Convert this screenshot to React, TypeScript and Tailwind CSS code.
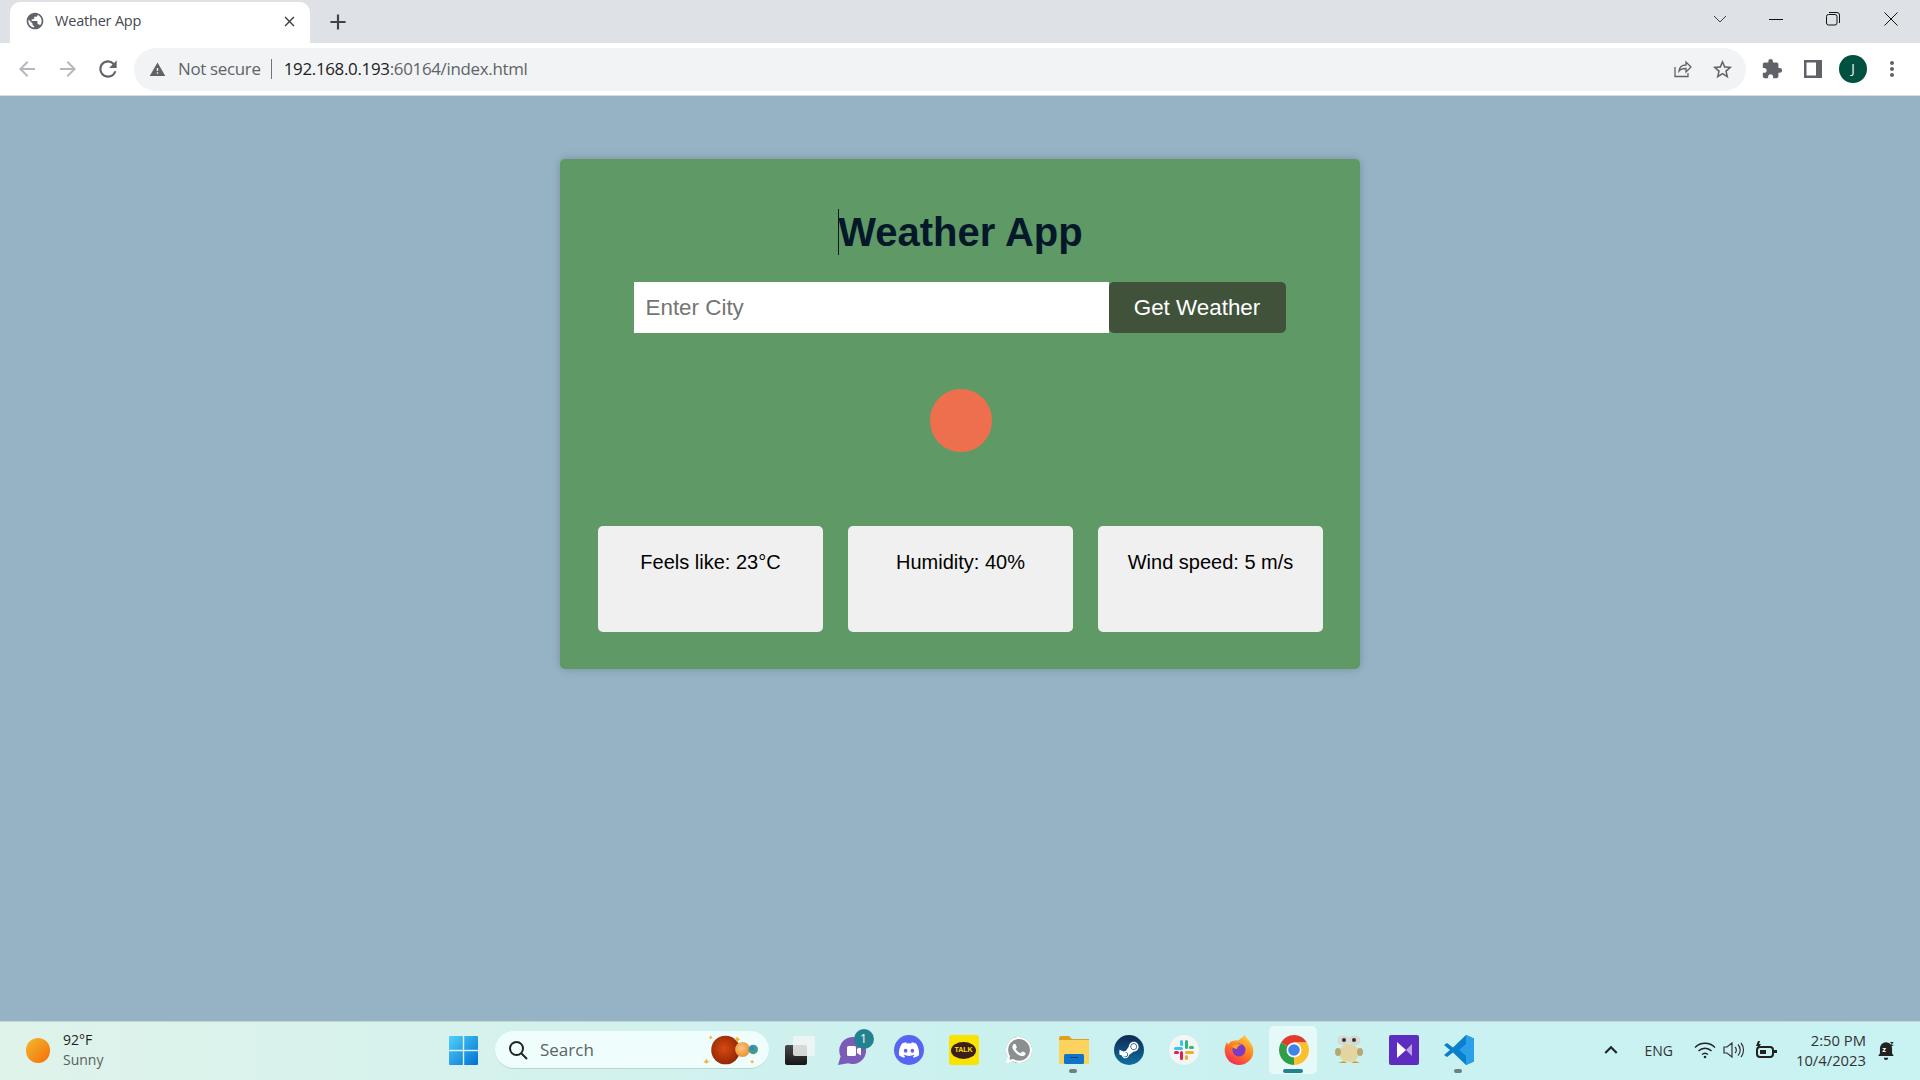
import React from "react";
import {
  MdAdd,
  MdArrowBack,
  MdArrowForward,
  MdClose,
  MdExtension,
  MdKeyboardArrowUp,
  MdMoreVert,
  MdPublic,
  MdRefresh,
  MdStarBorder,
  MdWarning,
} from "react-icons/md";
import { FaDiscord, FaSteamSymbol, FaWhatsapp } from "react-icons/fa";

const WinLogo = () => (
  <svg width="29" height="29" viewBox="0 0 29 29">
    <defs>
      <linearGradient id="win" x1="0" y1="0" x2="1" y2="1">
        <stop offset="0" stopColor="#52d0fb" />
        <stop offset="1" stopColor="#0070d0" />
      </linearGradient>
    </defs>
    <path d="M1 0h12.8v13.8H0V1a1 1 0 0 1 1-1zM15.2 0H28a1 1 0 0 1 1 1v12.8H15.2zM0 15.2h13.8V29H1a1 1 0 0 1-1-1zM15.2 15.2H29V28a1 1 0 0 1-1 1H15.2z" fill="url(#win)" />
  </svg>
);

const Planets = () => (
  <svg width="60" height="34" viewBox="0 0 56 32">
    <defs>
      <radialGradient id="mars" cx="0.45" cy="0.45" r="0.6">
        <stop offset="0" stopColor="#d64a10" />
        <stop offset="1" stopColor="#8f2404" />
      </radialGradient>
      <radialGradient id="venus" cx="0.4" cy="0.4" r="0.7">
        <stop offset="0" stopColor="#fbc57a" />
        <stop offset="1" stopColor="#ea8b2e" />
      </radialGradient>
    </defs>
    <circle cx="21" cy="16" r="13.500" fill="url(#mars)" />
    <circle cx="37" cy="15.500" r="7" fill="url(#venus)" />
    <circle cx="47" cy="15.500" r="4.500" fill="#3f9c8b" />
    <circle cx="46" cy="14.500" r="2" fill="#3c7fd0" />
    <path d="M32 3l1 2 2 1-2 1-1 2-1-2-2-1 2-1zM3 24l1 2 2 1-2 1-1 1-1-1-2-1 2-1zM7 2l.7 1.500 1.300.7-1.300.7L7 6l-.7-1.100L5 4.200l1.300-.7zM46 25l.7 1.300 1.300.7-1.300.7L46 29l-.7-1.300-1.300-.7 1.300-.7z" fill="#f2b431" />
  </svg>
);

const TaskView = () => (
  <div className="relative h-[29px] w-[30px]">
    <div className="absolute bottom-0 left-0 h-[20px] w-[22px] rounded-[2px] bg-linear-to-b from-[#4b4b4b] to-[#161616]" />
    <div className="absolute right-0 top-0 h-[20px] w-[22px] rounded-[2px] bg-[#f2f5f5]/85" />
  </div>
);

const Teams = () => (
  <div className="relative -mt-[6px] ml-[4px] h-[36px] w-[36px]">
    <svg width="29" height="29" viewBox="0 0 29 29" className="absolute bottom-0 left-0">
      <path d="M14.500 1a13.500 13.500 0 1 1-4.500 26.200L0 29l2.600-8.600A13.500 13.500 0 0 1 14.500 1z" fill="#7b5cb8" />
      <rect x="9" y="10" width="9" height="10" rx="1.500" fill="#fff" />
      <path d="M19 13l4-2.500v9L19 17z" fill="#fff" />
    </svg>
    <div className="absolute right-0 top-0 flex h-[20px] w-[20px] items-center justify-center rounded-full bg-[#23828f] font-['Open_Sans',sans-serif] text-[12px] text-white">
      1
    </div>
  </div>
);

const Discord = () => (
  <div className="flex h-[30px] w-[30px] items-center justify-center rounded-full bg-[#5865f2] text-white">
    <FaDiscord size={22} />
  </div>
);

const Kakao = () => (
  <div className="flex h-[30px] w-[30px] items-center justify-center rounded-[3px] bg-[#fbe300]">
    <div className="relative flex h-[17px] w-[25px] items-center justify-center rounded-[50%] bg-[#3b1e1e] font-['Liberation_Sans',sans-serif] text-[7px] font-bold text-[#fbe300]">
      TALK
    </div>
  </div>
);

const Whatsapp = () => (
  <div className="relative flex h-[30px] w-[30px] items-center justify-center">
    <div className="absolute h-[26px] w-[26px] rounded-full bg-[#8b8f8f]" />
    <FaWhatsapp size={30} className="relative text-white" />
  </div>
);

const Folder = () => (
  <svg width="30" height="28" viewBox="0 0 30 28">
    <path d="M0 2a2 2 0 0 1 2-2h8l3 3h17v4H0z" fill="#dfa01e" />
    <path d="M0 4h30v24H0z" fill="#fbd35d" />
    <rect x="5" y="18" width="20" height="10" rx="1.500" fill="#0f73c9" />
    <rect x="11" y="21" width="8" height="1" fill="#0a3f78" />
  </svg>
);

const Steam = () => (
  <div className="flex h-[30px] w-[30px] items-center justify-center rounded-full bg-linear-to-b from-[#0d2a52] to-[#0d6fa3] text-white">
    <FaSteamSymbol size={22} />
  </div>
);

const Slack = () => (
  <div className="flex h-[30px] w-[30px] items-center justify-center rounded-full bg-[#f4f6f6]">
    <svg width="20" height="20" viewBox="0 0 20 20">
      <rect x="0" y="7" width="9" height="3" rx="1.500" fill="#36c5f0" />
      <rect x="6" y="0" width="3" height="6" rx="1.500" fill="#36c5f0" />
      <rect x="11" y="0" width="3" height="9" rx="1.500" fill="#2eb67d" />
      <rect x="15" y="6" width="5" height="3" rx="1.500" fill="#2eb67d" />
      <rect x="11" y="11" width="9" height="3" rx="1.500" fill="#ecb22e" />
      <rect x="11" y="15" width="3" height="5" rx="1.500" fill="#ecb22e" />
      <rect x="6" y="11" width="3" height="9" rx="1.500" fill="#e01e5a" />
      <rect x="0" y="11" width="5" height="3" rx="1.500" fill="#e01e5a" />
    </svg>
  </div>
);

const Firefox = () => (
  <svg width="30" height="30" viewBox="0 0 30 30">
    <defs>
      <linearGradient id="ffx" x1="0.8" y1="0" x2="0.2" y2="1">
        <stop offset="0" stopColor="#ffd43b" />
        <stop offset="0.5" stopColor="#ff7a1f" />
        <stop offset="1" stopColor="#f0245c" />
      </linearGradient>
    </defs>
    <path d="M21 0c1 3 3 4 5 7 3 4 4 8 3 12-1 6-7 11-14 11S2 25 1 18C0 13 2 9 3 7l1 3c1-2 3-4 5-4 3-1 6 0 7-2 1-1 3-2 5-4z" fill="url(#ffx)" />
    <circle cx="15" cy="15" r="6.500" fill="#7b3bc4" />
    <path d="M8 11c3-2 7-3 10-1-3 0-5 2-5 4-2 0-4-1-5-3z" fill="#ffa02e" />
  </svg>
);

const Chrome = () => (
  <svg width="30" height="30" viewBox="0 0 30 30">
    <path d="M15 15L2.010 7.500A15 15 0 0 1 27.990 7.500H15z" fill="#e33b2e" />
    <path d="M15 15V7.500H27.990A15 15 0 0 1 15 30z" fill="#fbc02d" />
    <path d="M15 15V30A15 15 0 0 1 2.010 7.500z" fill="#2e9e48" />
    <circle cx="15" cy="15" r="7.500" fill="#fff" />
    <circle cx="15" cy="15" r="5.800" fill="#3f84ea" />
  </svg>
);

const Penguin = () => (
  <svg width="28" height="30" viewBox="0 0 28 30">
    <ellipse cx="14" cy="18" rx="10" ry="9" fill="#e4d4a0" />
    <ellipse cx="3" cy="17" rx="3" ry="4" fill="#b8a770" />
    <ellipse cx="25" cy="17" rx="3" ry="4" fill="#b8a770" />
    <ellipse cx="8.500" cy="5.500" rx="6" ry="5" fill="#d6d9cf" />
    <ellipse cx="19.500" cy="5.500" rx="6" ry="5" fill="#d6d9cf" />
    <circle cx="9" cy="5" r="2" fill="#333" />
    <circle cx="19" cy="5" r="2" fill="#333" />
    <path d="M3 28h9l-3-2zM16 28h9l-5-2z" fill="#d79a1e" />
  </svg>
);

const VisualStudio = () => (
  <svg width="30" height="30" viewBox="0 0 30 30">
    <rect width="30" height="30" rx="2" fill="#5f2cc0" />
    <path d="M8 7l9 8-9 8z" fill="#fff" />
    <path d="M17 15l6-6v12z" fill="#b9a3e8" />
  </svg>
);

const VsCode = () => (
  <svg width="30" height="30" viewBox="0 0 30 30">
    <path d="M22 0l8 3.500v23L22 30 9 17.500 3 22l-3-2 6-5-6-5 3-2 6 4.500z" fill="#0a7fcb" />
    <path d="M22 0l8 3.500v23L22 30V21l-7-6 7-6z" fill="#2ba0ea" />
  </svg>
);

const taskbarItems = [Teams, Discord, Kakao, Whatsapp, Folder, Steam, Slack, Firefox, Chrome, Penguin, VisualStudio, VsCode];

export default function App() {
  const stats = ["Feels like: 23°C", "Humidity: 40%", "Wind speed: 5 m/s"];

  return (
    <div className="flex h-screen w-full flex-col overflow-hidden bg-[#96b3c5] font-['Liberation_Sans',sans-serif]">
      {/* Tab strip */}
      <div className="flex h-[43px] shrink-0 items-end bg-[#dee1e6] pl-[10px]">
        <div className="flex h-[41px] w-[300px] items-center rounded-t-[10px] bg-white pb-[3px] pl-[15px] pr-[12px] font-['Open_Sans',sans-serif] text-[14.500px] text-[#45494e]">
          <MdPublic size={20} className="text-[#5f6368]" />
          <span className="ml-[10px] flex-1 tracking-[-0.2px]">Weather App</span>
          <MdClose size={17} className="text-[#3c4043]" />
        </div>
        <div className="mb-[8px] ml-[15px] flex items-center text-[#3f4347]">
          <MdAdd size={26} />
        </div>
        <div className="mb-[16px] ml-auto flex items-center text-[#3c4043]">
          <svg width="16" height="16" viewBox="0 0 16 16" fill="none" stroke="currentColor" className="mr-[41px]">
            <path d="M2 5l6 6 6-6" />
          </svg>
          <svg width="14" height="14" viewBox="0 0 14 14" fill="none" stroke="#111" className="mr-[43px]">
            <path d="M0 7.500h14" />
          </svg>
          <svg width="14" height="14" viewBox="0 0 14 14" fill="none" stroke="#111" className="mr-[44px]">
            <rect x="0.500" y="2.500" width="10.500" height="10.500" rx="2" />
            <path d="M3 .5h8a2.500 2.500 0 0 1 2.500 2.500v8" />
          </svg>
          <svg width="14" height="14" viewBox="0 0 14 14" fill="none" stroke="#111" className="mr-[22px]">
            <path d="M.5.5l13 13M13.500.5l-13 13" />
          </svg>
        </div>
      </div>

      {/* Toolbar */}
      <div className="flex h-[53px] shrink-0 items-center border-b border-[#d9dce0] bg-white pl-[15px] pr-[16px]">
        <MdArrowBack size={24} className="text-[#b4b7bb]" />
        <MdArrowForward size={24} className="ml-[17px] text-[#b4b7bb]" />
        <MdRefresh size={26} className="ml-[15px] text-[#5f6368]" />
        <div className="ml-[13px] flex h-[43px] flex-1 items-center rounded-full bg-[#f1f3f4] pl-[15px] pr-[12px] font-['Open_Sans',sans-serif] text-[16.900px] tracking-[-0.300px]">
          <MdWarning size={17} className="text-[#5f6368]" />
          <span className="ml-[12px] text-[#5f6368]">Not secure</span>
          <div className="ml-[10px] mr-[12px] h-[20px] w-px bg-[#70757a]" />
          <span className="text-[#202124]">192.168.0.193</span>
          <span className="text-[#5f6368]">:60164/index.html</span>
          <svg width="18" height="18" viewBox="0 0 18 18" fill="none" stroke="#5f6368" strokeWidth="1.300" className="ml-auto">
            <path d="M1 7v9.500h13V13M5 11c.5-4 3.500-6 7-6V2l5 5-5 5V8.500c-3 0-5.500 .5-7 2.500z" />
          </svg>
          <MdStarBorder size={23} className="ml-[19px] text-[#5f6368]" />
        </div>
        <MdExtension size={22} className="ml-[15px] text-[#5f6368]" />
        <svg width="18" height="18" viewBox="0 0 18 18" className="ml-[21px]">
          <path d="M0 0h18v18H0zM2.500 2.500v13H12v-13z" fill="#5f6368" fillRule="evenodd" />
        </svg>
        <div className="ml-[17px] flex h-[28px] w-[28px] items-center justify-center rounded-full bg-[#00513f] font-['Open_Sans',sans-serif] text-[13px] text-white">
          J
        </div>
        <MdMoreVert size={24} className="ml-[13px] text-[#5f6368]" />
      </div>

      {/* Page */}
      <div className="flex flex-1 justify-center bg-[#96b3c5] pt-[63px]">
        <div className="flex h-[510px] w-[800px] flex-col items-center rounded-[5px] bg-[#5f9a66] pb-[37px] pl-[38px] pr-[37px] pt-[50px] shadow-[0_0_10px_rgba(0,0,0,0.2)]">
          <h1 className="relative text-[40px] font-bold leading-[46px] text-[#04182a]">
            <span className="absolute bottom-0 left-0 top-0 w-px bg-[#04182a]" />
            Weather App
          </h1>
          <div className="mr-[2px] mt-[27px] flex h-[51px] w-[652px] shrink-0">
            <input
              type="text"
              placeholder="Enter City"
              className="h-full flex-1 bg-white pl-[12px] text-[22.400px] outline-none placeholder:text-[#757575]"
            />
            <button className="h-full w-[177px] rounded-[5px] bg-[#41523b] text-[22.400px] text-white">Get Weather</button>
          </div>
          <div className="mt-[56px] h-[63px] w-[62px] shrink-0 rounded-full bg-[#ee6f4e]" />
          <div className="mt-[74px] flex w-full gap-[25px]">
            {stats.map((stat) => (
              <div key={stat} className="h-[106px] flex-1 rounded-[5px] bg-[#f0f0f0] pt-[25px] text-center text-[20px] leading-[23px] text-black">
                {stat}
              </div>
            ))}
          </div>
        </div>
      </div>

      {/* Taskbar */}
      <div className="flex h-[59px] shrink-0 items-center border-t border-[#c4d6d2] bg-linear-to-r from-[#dff3ea] via-[#cbf1ef] to-[#c9f2f3] pb-[2px] font-['Open_Sans',sans-serif]">
        <div className="flex w-[449px] shrink-0 items-center pl-[26px]">
          <div className="h-[25px] w-[24px] rounded-full bg-linear-to-br from-[#f0b92c] to-[#f56a05]" />
          <div className="ml-[13px] text-[14px] leading-[20px]">
            <div className="text-[#1d1d1d]">92°F</div>
            <div className="text-[#5b5f60]">Sunny</div>
          </div>
        </div>
        <WinLogo />
        <div className="ml-[17px] flex h-[38px] w-[274px] items-center rounded-full border-b border-[#b5d5d5] bg-[#effdfd] pl-[13px] pr-[6px]">
          <svg width="20" height="20" viewBox="0 0 20 20" fill="none" stroke="#222" strokeWidth="2">
            <circle cx="8.500" cy="8.500" r="6.500" />
            <path d="M13 13l6 6" />
          </svg>
          <span className="ml-[12px] text-[17px] text-[#5b6364]">Search</span>
          <div className="ml-auto flex">
            <Planets />
          </div>
        </div>
        <div className="ml-[16px]">
          <TaskView />
        </div>
        <div className="ml-[11px] flex items-center">
          {taskbarItems.map((Icon, i) => (
            <div key={i} className="relative flex h-[48px] w-[55px] items-center justify-center">
              {Icon === Chrome && (
                <div className="absolute left-[3px] top-0 h-[48px] w-[48px] rounded-[5px] bg-[#e6f9f9]">
                  <div className="absolute bottom-[1px] left-[14px] h-[4px] w-[20px] rounded-full bg-[#23828f]" />
                </div>
              )}
              <div className="relative flex items-center justify-center">
                <Icon />
              </div>
              {(Icon === Folder || Icon === VsCode) && (
                <div className="absolute bottom-[1px] left-[23px] h-[4px] w-[8px] rounded-full bg-[#71807f]" />
              )}
            </div>
          ))}
        </div>
        <div className="ml-auto flex items-center pr-[23px] text-[#222]">
          <MdKeyboardArrowUp size={26} />
          <span className="ml-[20px] text-[14px] text-[#333]">ENG</span>
          <svg width="22" height="18" viewBox="0 0 22 18" fill="none" stroke="#222" strokeWidth="1.400" className="ml-[21px]">
            <path d="M1 6.500a14 14 0 0 1 20 0M4.500 10a9 9 0 0 1 13 0M8 13.500a4.500 4.500 0 0 1 6 0" />
            <circle cx="11" cy="16" r="1.300" fill="#222" stroke="none" />
          </svg>
          <svg width="22" height="18" viewBox="0 0 22 18" fill="none" stroke="#333" strokeWidth="1.200" className="ml-[7px]">
            <path d="M1 6v6h3l5 4V2L4 6zM12 6a4 4 0 0 1 0 6M15 3.500a8 8 0 0 1 0 11M18 2a11 11 0 0 1 0 14" />
          </svg>
          <svg width="22" height="18" viewBox="0 0 22 18" className="ml-[10px]">
            <rect x="2" y="6" width="16" height="10" rx="3" fill="none" stroke="#222" strokeWidth="2" />
            <rect x="5" y="9" width="6" height="4" fill="#222" />
            <rect x="19" y="9" width="3" height="3" fill="#222" />
            <path d="M3 0L1 5h2l-1 4 4-6H4l1-3z" fill="#222" />
          </svg>
          <div className="-mt-[1px] ml-[19px] text-right text-[14.800px] leading-[20px] text-[#333]">
            <div>2:50 PM</div>
            <div>10/4/2023</div>
          </div>
          <svg width="22" height="24" viewBox="0 0 20 20" className="ml-[9px]">
            <path d="M10 3a5.500 5.500 0 0 0-5.500 5.500V13L3 15.500h14L15.500 13V8.500A5.500 5.500 0 0 0 10 3zM8 17h4a2 2 0 0 1-4 0z" fill="#222" />
            <text x="6.500" y="12" fontSize="7" fontWeight="700" fill="#fff">z</text>
            <text x="13.500" y="6" fontSize="7" fontWeight="700" fill="#222">z</text>
          </svg>
        </div>
      </div>
    </div>
  );
}
